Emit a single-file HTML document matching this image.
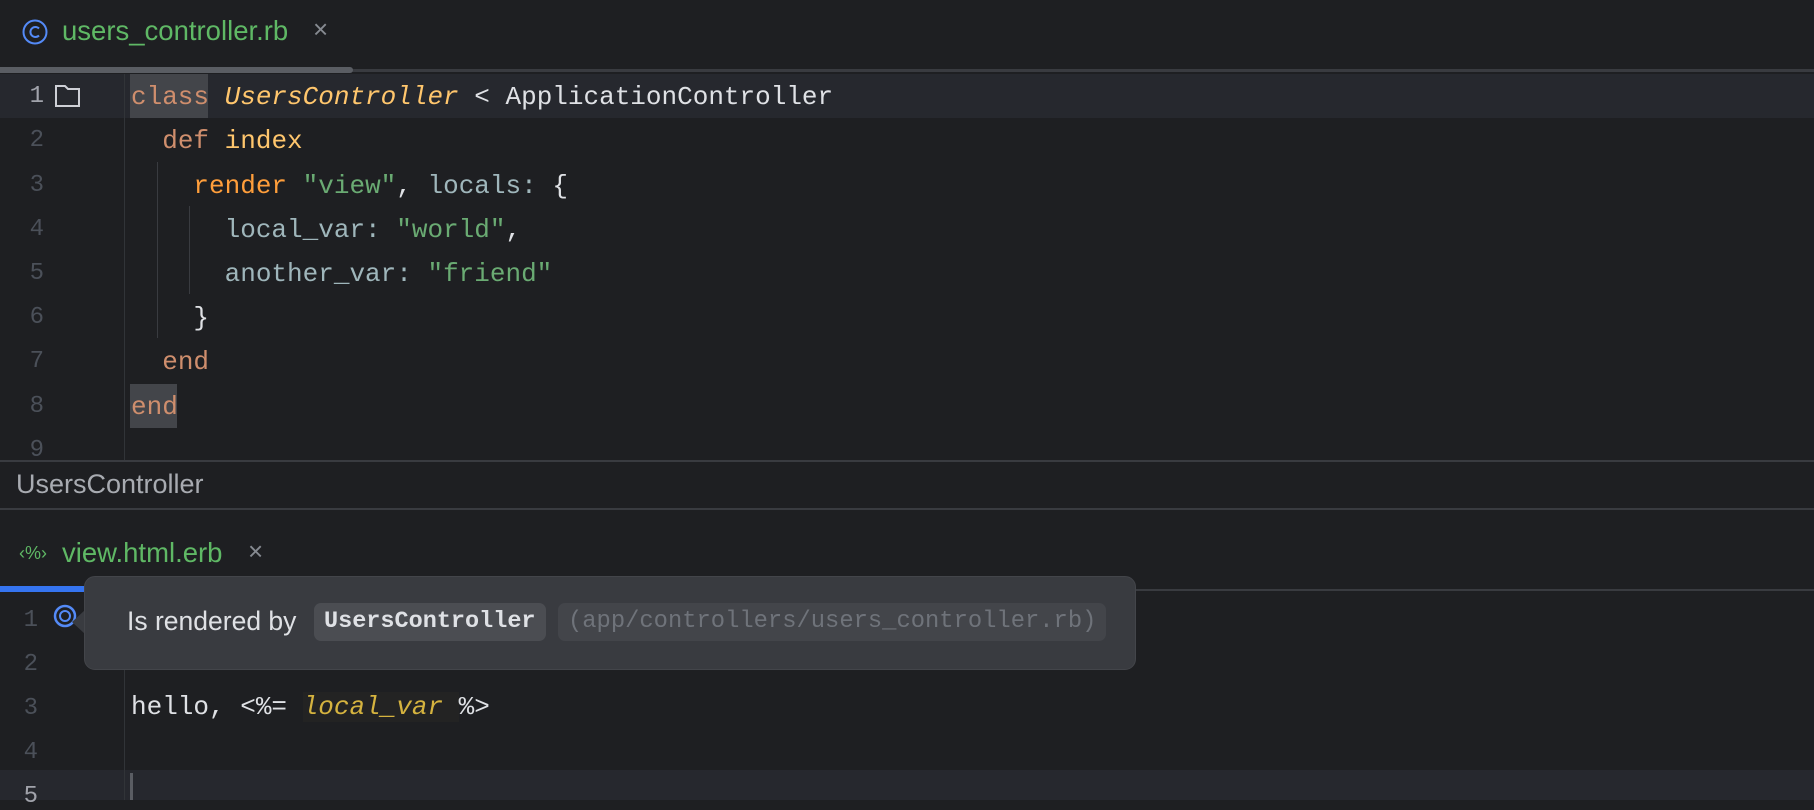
<!DOCTYPE html>
<html><head><style>
*{margin:0;padding:0;box-sizing:border-box}
body{width:1814px;height:800px;background:#1e1f22;overflow:hidden;position:relative;font-family:"Liberation Sans",sans-serif}
.abs{position:absolute}
.mono{font-family:"Liberation Mono",monospace;font-size:26px;white-space:pre}
.ln{position:absolute;left:0;width:44px;text-align:right;color:#4b5059;font-family:"Liberation Mono",monospace;font-size:24px}
.code{position:absolute;left:131px}
.k{color:#cf8e6d}.c{color:#ffc66d;font-style:italic}.w{color:#dfe1e5}.s{color:#6aab73}.y{color:#ffc66d}.o{color:#ff9e3b}.t{color:#9fb6bb}
</style></head><body>
<!-- top tab -->
<svg class="abs" style="left:21px;top:18px" width="28" height="28" viewBox="0 0 28 28"><circle cx="14" cy="14" r="11.5" fill="none" stroke="#548af7" stroke-width="2"/><path d="M18 10.5a5 5 0 1 0 0 7" fill="none" stroke="#548af7" stroke-width="2"/></svg>
<div class="abs" style="left:62px;top:15px;color:#5fb865;font-size:27.5px">users_controller.rb</div>
<div class="abs" style="left:313px;top:14px;color:#868a91;font-size:26px">×</div>
<div class="abs" style="left:0;top:69px;width:1814px;height:3px;background:#393b40"></div>
<div class="abs" style="left:0;top:67px;width:353px;height:6px;background:#5a5d63;border-radius:0 3px 3px 0"></div>
<!-- current line -->
<div class="abs" style="left:0;top:74px;width:1814px;height:44px;background:#26282e"></div>
<div class="abs" style="left:124px;top:74px;width:1px;height:387px;background:#313438"></div>
<div class="abs" style="left:130px;top:74px;width:78px;height:44px;background:#43454a"></div>
<div class="abs" style="left:130px;top:384px;width:47px;height:44px;background:#43454a"></div>
<div class="abs" style="left:157px;top:162px;width:1px;height:176px;background:#393b40"></div>
<div class="abs" style="left:189px;top:206px;width:1px;height:88px;background:#393b40"></div>
<svg class="abs" style="left:54px;top:84px" width="28" height="24" viewBox="0 0 28 24"><path d="M2 2h9l3 3h11v17H2z" fill="none" stroke="#ced0d6" stroke-width="2"/></svg>
<div class="ln" style="top:83px;color:#a1a3ab">1</div>
<div class="ln" style="top:127px">2</div><div class="ln" style="top:172px">3</div><div class="ln" style="top:216px">4</div><div class="ln" style="top:260px">5</div><div class="ln" style="top:304px">6</div><div class="ln" style="top:348px">7</div><div class="ln" style="top:393px">8</div><div class="ln" style="top:437px">9</div>
<div class="code mono" style="top:82px"><span class="k">class</span> <span class="c">UsersController</span> <span class="w">&lt; ApplicationController</span></div>
<div class="code mono" style="top:126px">  <span class="k">def</span> <span class="y">index</span></div>
<div class="code mono" style="top:171px">    <span class="o">render</span> <span class="s">"view"</span><span class="w">,</span> <span class="t">locals:</span> <span class="w">{</span></div>
<div class="code mono" style="top:215px">      <span class="t">local_var:</span> <span class="s">"world"</span><span class="w">,</span></div>
<div class="code mono" style="top:259px">      <span class="t">another_var:</span> <span class="s">"friend"</span></div>
<div class="code mono" style="top:303px">    <span class="w">}</span></div>
<div class="code mono" style="top:347px">  <span class="k">end</span></div>
<div class="code mono" style="top:392px"><span class="k">end</span></div>
<!-- breadcrumb -->
<div class="abs" style="left:0;top:460px;width:1814px;height:2px;background:#393b40"></div>
<div class="abs" style="left:16px;top:469px;color:#a8abb1;font-size:27px">UsersController</div>
<div class="abs" style="left:0;top:508px;width:1814px;height:2px;background:#393b40"></div>
<!-- bottom tab -->
<div class="abs" style="left:19px;top:543px;color:#5fb865;font-size:18px">‹%›</div>
<div class="abs" style="left:62px;top:537px;color:#5fb865;font-size:27.5px">view.html.erb</div>
<div class="abs" style="left:248px;top:536px;color:#868a91;font-size:26px">×</div>
<div class="abs" style="left:0;top:589px;width:1814px;height:2px;background:#393b40"></div>
<div class="abs" style="left:0;top:586px;width:90px;height:6px;background:#3574f0"></div>
<div class="abs" style="left:0;top:770px;width:1814px;height:30px;background:#26282e"></div>
<div class="abs" style="left:124px;top:591px;width:1px;height:209px;background:#313438"></div>
<div class="abs" style="left:130px;top:773px;width:3px;height:27px;background:#5a5d63"></div>
<div class="ln" style="left:-6px;top:607px">1</div><div class="ln" style="left:-6px;top:651px">2</div><div class="ln" style="left:-6px;top:695px">3</div><div class="ln" style="left:-6px;top:739px">4</div><div class="ln" style="left:-6px;top:783px;color:#a1a3ab">5</div>
<svg class="abs" style="left:53px;top:604px" width="26" height="26" viewBox="0 0 26 26"><circle cx="12" cy="12" r="10" fill="none" stroke="#548af7" stroke-width="2.5"/><circle cx="12" cy="12" r="5" fill="none" stroke="#548af7" stroke-width="2"/></svg>
<div class="code mono" style="top:692px"><span class="w">hello, &lt;%=</span> <span style="background:#232323;color:#d5b33f;font-style:italic">local_var </span><span class="w">%&gt;</span></div>
<!-- popup -->
<div class="abs" style="left:72px;top:610px;width:0;height:0;border-top:12px solid transparent;border-bottom:12px solid transparent;border-right:13px solid #393b40"></div>
<div class="abs" style="left:84px;top:576px;width:1052px;height:94px;background:#393b40;border-radius:11px;border:1px solid #43454a"></div>
<div class="abs" style="left:127px;top:606px;color:#dfe1e5;font-size:26.5px">Is rendered by</div>
<div class="abs mono" style="left:314px;top:603px;height:38px;padding:5px 10px 0;background:#4b4d52;border-radius:7px;color:#dfe1e5;font-size:23.5px;font-weight:bold">UsersController</div>
<div class="abs mono" style="left:558px;top:603px;height:38px;padding:5px 10px 0;background:#43454a;border-radius:7px;color:#6f737a;font-size:23.8px">(app/controllers/users_controller.rb)</div>
</body></html>
